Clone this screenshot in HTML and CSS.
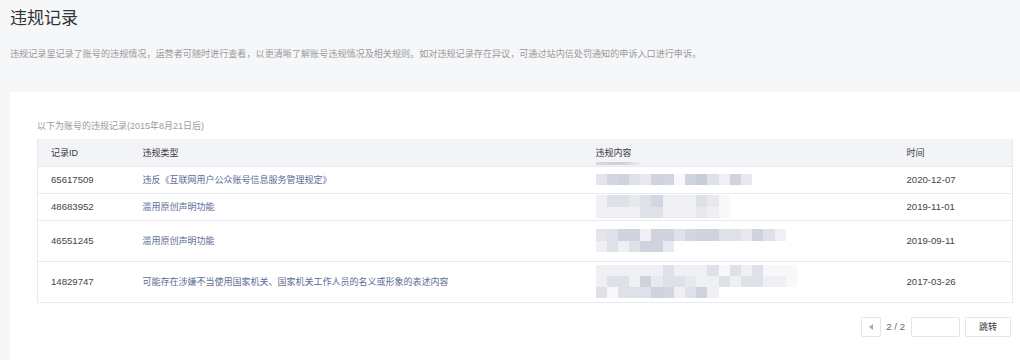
FILE: index.html
```html
<!DOCTYPE html>
<html lang="zh-CN">
<head>
<meta charset="utf-8">
<title>违规记录</title>
<link rel="stylesheet" href="styles.css">
</head>
<body>
<div class="page">
  <h1 class="title">违规记录</h1>
  <p class="desc">违规记录里记录了账号的违规情况，运营者可随时进行查看，以更清晰了解账号违规情况及相关规则。如对违规记录存在异议，可通过站内信处罚通知的申诉入口进行申诉。</p>
  <div class="card">
    <div class="caption">以下为账号的违规记录(2015年8月21日后)</div>
    <table class="tbl">
      <colgroup>
        <col class="c-id"><col class="c-type"><col class="c-content"><col class="c-time">
      </colgroup>
      <thead>
        <tr class="head">
          <th>记录ID</th>
          <th>违规类型</th>
          <th><span class="hd-content">违规内容</span></th>
          <th>时间</th>
        </tr>
      </thead>
      <tbody>
        <tr class="r1">
          <td class="num">65617509</td>
          <td class="link">违反《互联网用户公众账号信息服务管理规定》</td>
          <td><div class="blur">
            <div class="ln"><i class="a"></i><i class="b"></i><i class="c"></i><i class="d"></i><i class="d2"></i><i class="c"></i><i class="b"></i><i class="w"></i><i class="c"></i><i class="f"></i><i class="d"></i><i class="e"></i><i class="c"></i><i class="d2"></i></div>
          </div></td>
          <td class="num">2020-12-07</td>
        </tr>
        <tr class="r1">
          <td class="num">48683952</td>
          <td class="link">滥用原创声明功能</td>
          <td><div class="blur">
            <div class="ln"><i class="e"></i><i class="d"></i><i class="d"></i><i class="d2"></i><i class="d"></i><i class="b"></i><i class="e"></i><i class="e"></i><i class="e"></i><i class="d"></i><i class="d2"></i><i class="w"></i></div>
            <div class="ln"><i class="e"></i><i class="e"></i><i class="e"></i><i class="e"></i><i class="d"></i><i class="d"></i><i class="e"></i><i class="e"></i><i class="e"></i><i class="d2"></i><i class="e"></i><i class="w"></i></div>
          </div></td>
          <td class="num">2019-11-01</td>
        </tr>
        <tr class="r2">
          <td class="num">46551245</td>
          <td class="link">滥用原创声明功能</td>
          <td><div class="blur">
            <div class="ln"><i class="a"></i><i class="d"></i><i class="c"></i><i class="c"></i><i class="e"></i><i class="c"></i><i class="c"></i><i class="d"></i><i class="b"></i><i class="c"></i><i class="c"></i><i class="d"></i><i class="d"></i><i class="d2"></i><i class="c"></i><i class="d"></i><i class="e"></i></div>
            <div class="ln"><i class="e"></i><i class="d"></i><i class="e"></i><i class="d"></i><i class="c"></i><i class="c"></i><i class="d2"></i></div>
          </div></td>
          <td class="num">2019-09-11</td>
        </tr>
        <tr class="r2">
          <td class="num">14829747</td>
          <td class="link">可能存在涉嫌不当使用国家机关、国家机关工作人员的名义或形象的表述内容</td>
          <td><div class="blur">
            <div class="ln"><i class="e"></i><i class="e"></i><i class="e"></i><i class="e"></i><i class="e"></i><i class="e"></i><i class="d"></i><i class="e"></i><i class="e"></i><i class="e"></i><i class="d"></i><i class="w"></i><i class="d"></i><i class="e"></i><i class="d"></i><i class="w"></i><i class="w"></i><i class="w"></i></div>
            <div class="ln"><i class="e"></i><i class="d"></i><i class="d"></i><i class="e"></i><i class="c"></i><i class="d2"></i><i class="d"></i><i class="d"></i><i class="d2"></i><i class="e"></i><i class="e"></i><i class="d"></i><i class="e"></i><i class="d"></i><i class="d"></i><i class="e"></i><i class="e"></i><i class="w"></i></div>
            <div class="ln"><i class="d"></i><i class="w"></i><i class="d"></i><i class="d"></i><i class="d"></i><i class="c"></i><i class="b"></i><i class="e"></i><i class="d"></i><i class="c"></i><i class="e"></i></div>
          </div></td>
          <td class="num">2017-03-26</td>
        </tr>
      </tbody>
    </table>
    <div class="pager">
      <button class="prev" type="button"><span class="tri"></span></button>
      <span class="count">2 / 2</span>
      <input class="jump-input" type="text">
      <button class="jump" type="button">跳转</button>
    </div>
  </div>
</div>
</body>
</html>
```

FILE: styles.css
```css
* { box-sizing: border-box; }
html, body {
  margin: 0;
  padding: 0;
  background: #f6f7f9;
  font-family: "Liberation Sans", "Noto Sans CJK SC", sans-serif;
  color: #333;
}
.page {
  padding-left: 10px;
  height: 360px;
  overflow: hidden;
}
.title {
  margin: 0;
  padding-top: 7px;
  font-size: 17px;
  line-height: 24px;
  font-weight: normal;
  color: #333;
}
.desc {
  margin: 15px 0 0;
  font-size: 9.1px;
  line-height: 16px;
  color: #9a9a9a;
}
.card {
  margin-top: 30px;
  background: #fff;
  padding: 27px 8px 20px 27px;
  min-height: 300px;
}
.caption {
  font-size: 9px;
  line-height: 14px;
  color: #9c9c9c;
  margin-bottom: 6px;
}
.tbl {
  width: 975px;
  border-collapse: collapse;
  table-layout: fixed;
  border-left: 1px solid #e8e9ee;
  border-right: 1px solid #e8e9ee;
  border-bottom: 1px solid #e8e9ee;
  font-size: 9px;
}
.c-id { width: 92px; }
.c-type { width: 453px; }
.c-content { width: 311px; }
.c-time { width: 119px; }
.tbl th, .tbl td {
  padding: 0 0 0 13px;
  text-align: left;
  vertical-align: middle;
  font-weight: normal;
}
.head { background: #f3f4f7; height: 27px; }
.head th { color: #3a3a3a; border-bottom: 1px solid #e8e9ee; }
.hd-content { position: relative; }
.hd-content::after {
  content: "";
  position: absolute;
  left: 0;
  top: 14px;
  width: 44px;
  height: 3px;
  background: linear-gradient(90deg, #d8d8dc, #cfcfd4 60%, #ececef);
}
.tbl tbody tr { border-bottom: 1px solid #e8e9ee; }
.r1 { height: 27px; }
.r2 { height: 41px; }
.num { font-size: 9.6px; color: #444; }
.link { color: #5d6c94; }
.blur {
  display: flex;
  flex-direction: column;
}
.ln { display: flex; }
.ln i {
  display: block;
  width: 11.2px;
  height: 11.3px;
}
.a { background: #e6e4ea; }
.b { background: #d3d6e1; }
.c { background: #d0d2dd; }
.d { background: #dfe1e9; }
.d2 { background: #e7e9ef; }
.e { background: #eef0f4; }
.f { background: #c8ccd8; }
.w { background: #f8f8fa; }
.pager {
  display: flex;
  justify-content: flex-end;
  align-items: center;
  margin-top: 14px;
  padding-right: 1px;
  height: 20px;
}
.prev {
  width: 20px;
  height: 20px;
  border: 1px solid #e5e5e8;
  background: #fff;
  border-radius: 2px;
  padding: 0;
  display: flex;
  align-items: center;
  justify-content: center;
}
.tri {
  width: 0;
  height: 0;
  border-top: 3px solid transparent;
  border-bottom: 3px solid transparent;
  border-right: 4px solid #a8a8ac;
}
.count {
  margin: 0 6px 0 5px;
  font-size: 9.6px;
  color: #666;
}
.jump-input {
  width: 49px;
  height: 20px;
  border: 1px solid #e5e5e8;
  border-radius: 2px;
  margin: 0 5px 0 0;
  padding: 0;
  background: #fff;
}
.jump {
  width: 46px;
  height: 20px;
  border: 1px solid #e5e5e8;
  border-radius: 2px;
  background: #fff;
  font-family: "Liberation Sans", "Noto Sans CJK SC", sans-serif;
  font-size: 9px;
  color: #333;
  padding: 0;
}
```
